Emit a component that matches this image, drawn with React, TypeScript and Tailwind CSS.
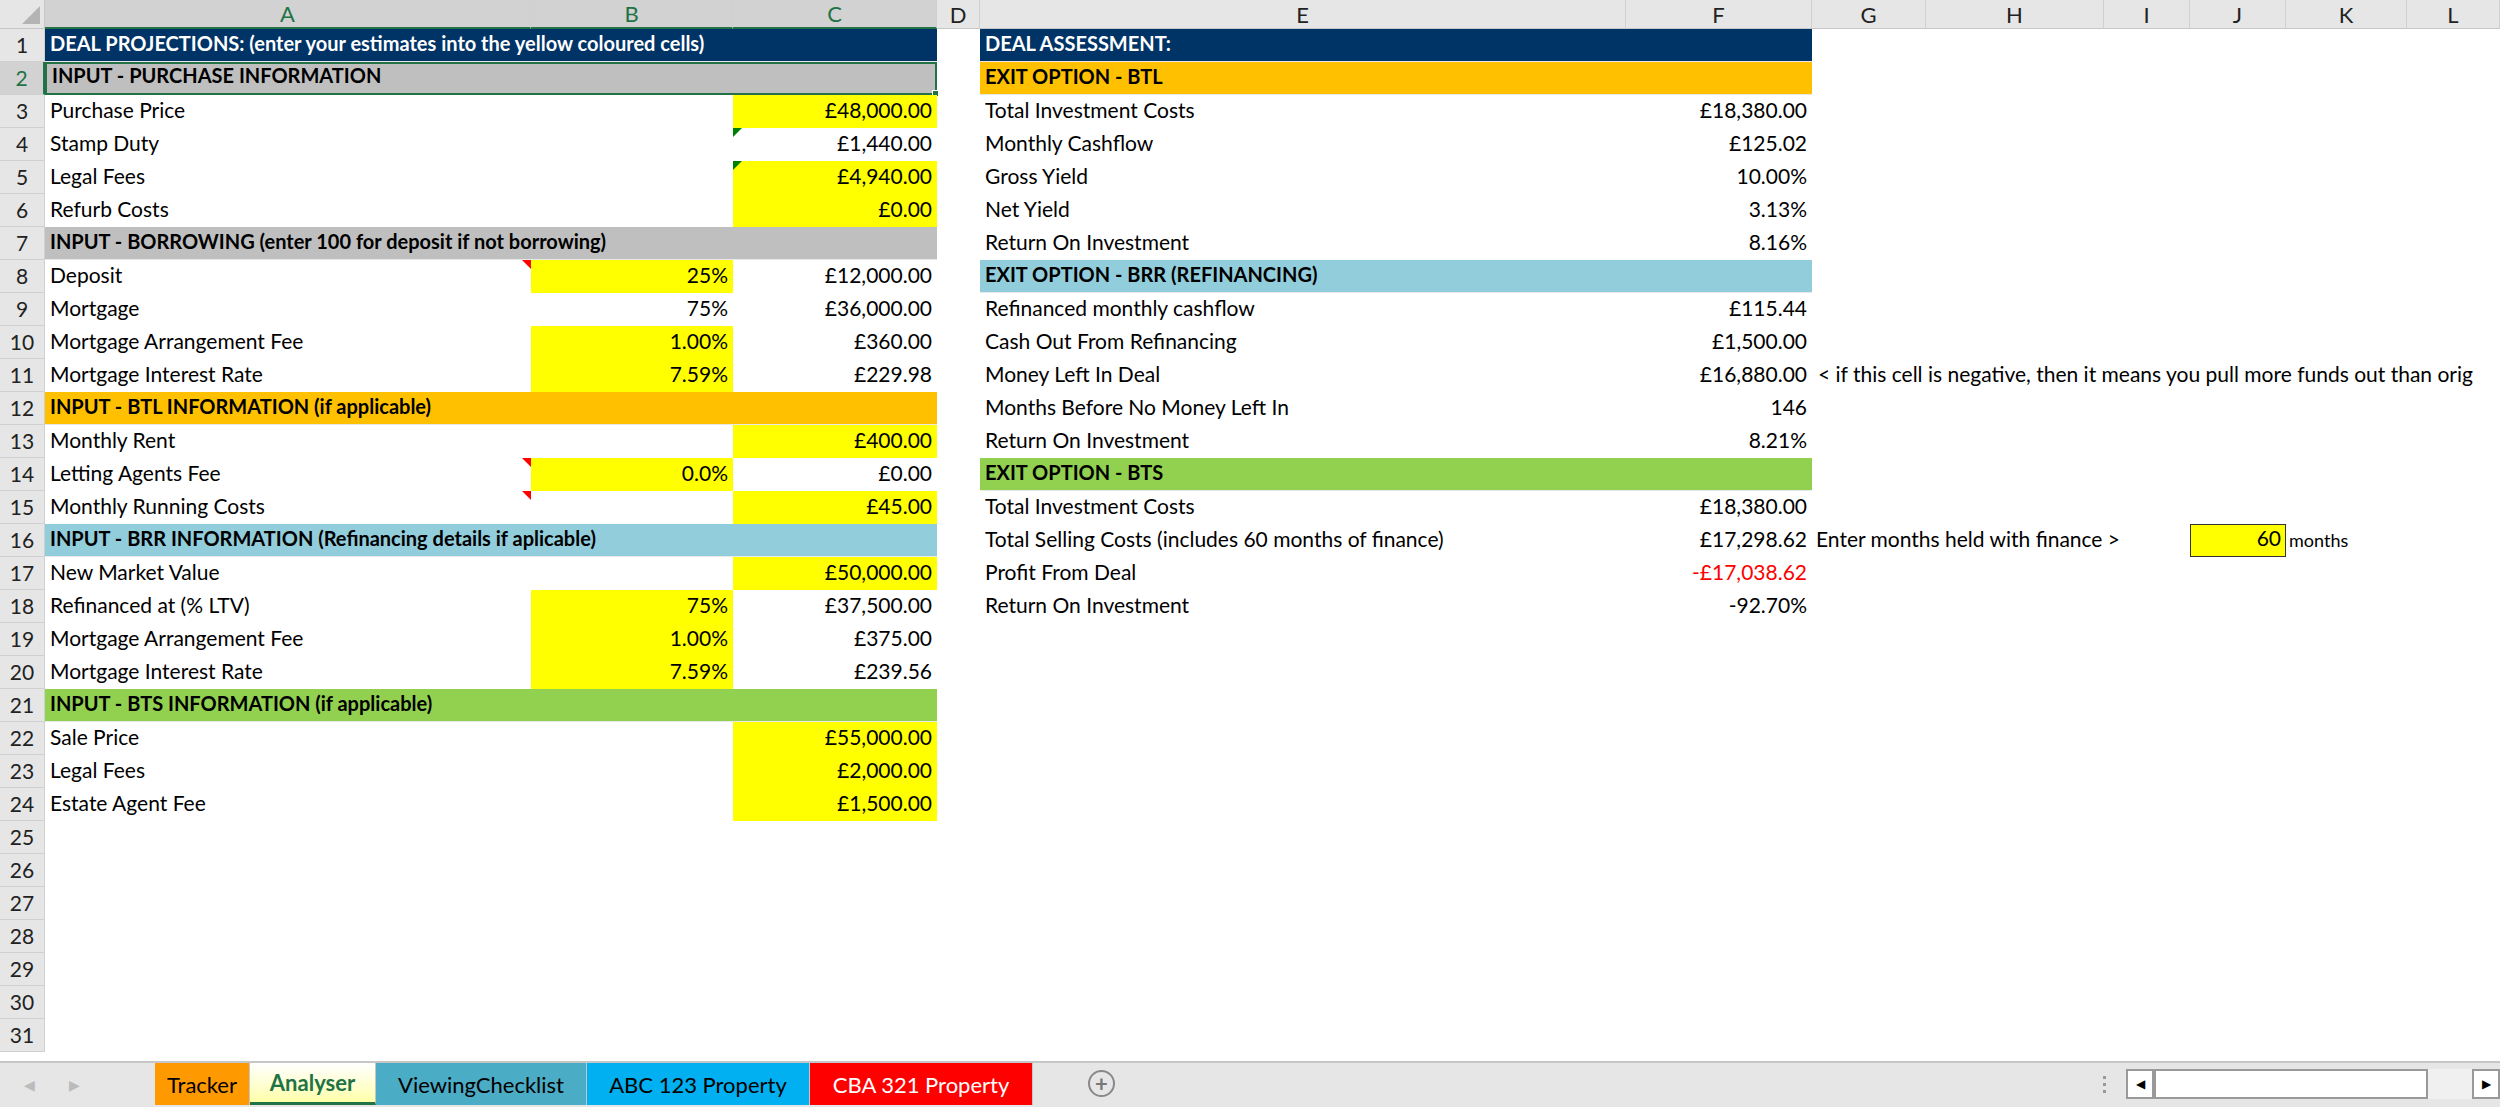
import React from "react";

const NAVY = "bg-[#003366] text-white";
const GRAY = "bg-[#bfbfbf]";
const ORANGE = "bg-[#ffc000]";
const BLUE = "bg-[#92cddc]";
const GREEN = "bg-[#92d050]";

type Left =
  | { hdr: string; bg: string; sel?: boolean }
  | { a?: string; b?: string; c?: string; by?: boolean; cy?: boolean; aRed?: boolean; cGreen?: boolean };
type Right = { hdr: string; bg: string } | { e?: string; f?: string; red?: boolean };

const left: Left[] = [
  { hdr: "DEAL PROJECTIONS: (enter your estimates into the yellow coloured cells)", bg: NAVY },
  { hdr: "INPUT - PURCHASE INFORMATION", bg: GRAY, sel: true },
  { a: "Purchase Price", c: "£48,000.00", cy: true },
  { a: "Stamp Duty", c: "£1,440.00", cGreen: true },
  { a: "Legal Fees", c: "£4,940.00", cy: true, cGreen: true },
  { a: "Refurb Costs", c: "£0.00", cy: true },
  { hdr: "INPUT - BORROWING (enter 100 for deposit if not borrowing)", bg: GRAY },
  { a: "Deposit", b: "25%", by: true, c: "£12,000.00", aRed: true },
  { a: "Mortgage", b: "75%", c: "£36,000.00" },
  { a: "Mortgage Arrangement Fee", b: "1.00%", by: true, c: "£360.00" },
  { a: "Mortgage Interest Rate", b: "7.59%", by: true, c: "£229.98" },
  { hdr: "INPUT - BTL INFORMATION (if applicable)", bg: ORANGE },
  { a: "Monthly Rent", c: "£400.00", cy: true },
  { a: "Letting Agents Fee", b: "0.0%", by: true, c: "£0.00", aRed: true },
  { a: "Monthly Running Costs", c: "£45.00", cy: true, aRed: true },
  { hdr: "INPUT - BRR INFORMATION (Refinancing details if aplicable)", bg: BLUE },
  { a: "New Market Value", c: "£50,000.00", cy: true },
  { a: "Refinanced at (% LTV)", b: "75%", by: true, c: "£37,500.00" },
  { a: "Mortgage Arrangement Fee", b: "1.00%", by: true, c: "£375.00" },
  { a: "Mortgage Interest Rate", b: "7.59%", by: true, c: "£239.56" },
  { hdr: "INPUT - BTS INFORMATION (if applicable)", bg: GREEN },
  { a: "Sale Price", c: "£55,000.00", cy: true },
  { a: "Legal Fees", c: "£2,000.00", cy: true },
  { a: "Estate Agent Fee", c: "£1,500.00", cy: true },
];

const right: Right[] = [
  { hdr: "DEAL ASSESSMENT:", bg: NAVY },
  { hdr: "EXIT OPTION - BTL", bg: ORANGE },
  { e: "Total Investment Costs", f: "£18,380.00" },
  { e: "Monthly Cashflow", f: "£125.02" },
  { e: "Gross Yield", f: "10.00%" },
  { e: "Net Yield", f: "3.13%" },
  { e: "Return On Investment", f: "8.16%" },
  { hdr: "EXIT OPTION - BRR (REFINANCING)", bg: BLUE },
  { e: "Refinanced monthly cashflow", f: "£115.44" },
  { e: "Cash Out From Refinancing", f: "£1,500.00" },
  { e: "Money Left In Deal", f: "£16,880.00" },
  { e: "Months Before No Money Left In", f: "146" },
  { e: "Return On Investment", f: "8.21%" },
  { hdr: "EXIT OPTION - BTS", bg: GREEN },
  { e: "Total Investment Costs", f: "£18,380.00" },
  { e: "Total Selling Costs (includes 60 months of finance)", f: "£17,298.62" },
  { e: "Profit From Deal", f: "-£17,038.62", red: true },
  { e: "Return On Investment", f: "-92.70%" },
];

const cols = ["A", "B", "C", "D", "E", "F", "G", "H", "I", "J", "K", "L"];
const cell = "h-[33px] flex items-end pb-[3px] whitespace-nowrap overflow-visible relative";

function RowHead({ n }: { n: number }) {
  const sel = n === 2;
  return (
    <div
      className={`h-[33px] flex items-center justify-center border-b border-r border-[#d0d0d0] text-[21px] ${
        sel ? "bg-[#d2d2d2] text-[#217346] border-r-2 border-r-[#217346]" : "bg-[#e6e6e6] text-[#222]"
      }`}
    >
      {n}
    </div>
  );
}

function LeftCells({ l }: { l?: Left }) {
  if (!l) return <><div className={cell} /><div className={cell} /><div className={cell} /></>;
  if ("hdr" in l)
    return (
      <div
        className={`col-span-3 ${cell} ${l.bg} font-bold pl-[5px] text-[20px] ${
          l.sel ? "border-2 border-[#217346]" : "border-b border-[#e8e8e8]"
        }`}
      >
        {l.hdr}
        {l.sel && <span className="absolute right-[-4px] bottom-[-4px] w-[7px] h-[7px] bg-[#217346] border border-white" />}
      </div>
    );
  return (
    <>
      <div className={`${cell} pl-[5px]`}>
        {l.a}
        {l.aRed && (
          <span className="absolute right-0 top-0 w-0 h-0 border-t-[9px] border-t-[#ff0000] border-l-[9px] border-l-transparent" />
        )}
      </div>
      <div className={`${cell} justify-end pr-[5px] ${l.by ? "bg-[#ffff00]" : ""}`}>{l.b}</div>
      <div className={`${cell} justify-end pr-[5px] ${l.cy ? "bg-[#ffff00]" : ""}`}>
        {l.cGreen && (
          <span className="absolute left-0 top-0 w-0 h-0 border-t-[9px] border-t-[#008000] border-r-[9px] border-r-transparent" />
        )}
        {l.c}
      </div>
    </>
  );
}

function RightCells({ r }: { r?: Right }) {
  if (!r) return <><div className={cell} /><div className={cell} /></>;
  if ("hdr" in r)
    return (
      <div className={`col-span-2 ${cell} ${r.bg} font-bold pl-[5px] text-[20px] border-b border-[#e8e8e8]`}>{r.hdr}</div>
    );
  return (
    <>
      <div className={`${cell} pl-[5px]`}>{r.e}</div>
      <div className={`${cell} justify-end pr-[5px] ${r.red ? "text-[#ff0000]" : ""}`}>{r.f}</div>
    </>
  );
}

function Extra({ n }: { n: number }) {
  if (n === 11)
    return (
      <>
        <div className={`${cell} pl-[6px]`}>&lt; if this cell is negative, then it means you pull more funds out than orig</div>
        {[0, 1, 2, 3, 4].map((i) => <div key={i} className={cell} />)}
      </>
    );
  if (n === 16)
    return (
      <>
        <div className={`${cell} pl-[4px]`}>Enter months held with finance &gt;</div>
        <div className={cell} />
        <div className={cell} />
        <div className={`${cell} justify-end pr-[4px] bg-[#ffff00] border border-[#333]`}>60</div>
        <div className={`${cell} pl-[3px] text-[18px]`}>months</div>
        <div className={cell} />
      </>
    );
  return <>{[0, 1, 2, 3, 4, 5].map((i) => <div key={i} className={cell} />)}</>;
}

function TabBar() {
  const tabs = [
    { t: "Tracker", c: "bg-[#ff9900] text-black w-[95px]" },
    { t: "Analyser", c: "bg-gradient-to-b from-white to-[#ffffa8] text-[#217346] font-bold w-[126px] border-b-[3px] border-b-[#217346]" },
    { t: "ViewingChecklist", c: "bg-[#4bacc6] text-black w-[211px]" },
    { t: "ABC 123 Property", c: "bg-[#00b0f0] text-black w-[223px]" },
    { t: "CBA 321 Property", c: "bg-[#ff0000] text-white w-[223px]" },
  ];
  return (
    <div className="h-[46px] bg-[#e6e6e6] border-t-2 border-[#c6c6c6] flex items-start relative">
      <div className="w-[155px] flex items-center gap-[34px] pl-[24px] h-[42px] text-[#bbb] text-[14px]">
        <span>◀</span>
        <span>▶</span>
      </div>
      {tabs.map((x) => (
        <div
          key={x.t}
          className={`h-[42px] flex items-center justify-center text-[22px] border-r border-[#c6c6c6] ${x.c}`}
        >
          {x.t}
        </div>
      ))}
      <div className="ml-[55px] mt-[7px] w-[27px] h-[27px] rounded-full border-2 border-[#888] flex items-center justify-center text-[#777] text-[22px] font-bold leading-none">
        +
      </div>
      <div className="ml-auto flex items-center h-[42px]">
        <div className="flex flex-col gap-[4px] mr-[20px]">
          <span className="w-[3px] h-[3px] bg-[#999]" />
          <span className="w-[3px] h-[3px] bg-[#999]" />
          <span className="w-[3px] h-[3px] bg-[#999]" />
        </div>
        <div className="flex h-[30px] w-[374px] bg-[#f0f0f0]">
          <div className="w-[28px] border-2 border-[#999] bg-white flex items-center justify-center text-[12px]">◀</div>
          <div className="w-[274px] border-2 border-[#999] bg-white" />
          <div className="flex-1" />
          <div className="w-[28px] border-2 border-[#999] bg-white flex items-center justify-center text-[12px]">▶</div>
        </div>
      </div>
    </div>
  );
}

export default function App() {
  const rows = Array.from({ length: 31 }, (_, i) => i + 1);
  return (
    <div className="w-[2500px] h-[1107px] overflow-hidden bg-white text-[21px] text-black flex flex-col" style={{ fontFamily: "Lato, 'Open Sans', sans-serif" }}>
      <div className="flex-1 overflow-hidden">
        <div className="grid grid-cols-[45px_486px_202px_204px_43px_646px_186px_114px_178px_86px_96px_121px_1fr]">
          <div className="h-[29px] bg-[#e6e6e6] border-b border-r border-[#c6c6c6] relative">
            <span className="absolute right-[4px] bottom-[4px] w-0 h-0 border-b-[18px] border-b-[#b4b4b4] border-l-[18px] border-l-transparent" />
          </div>
          {cols.map((c, i) => (
            <div
              key={c}
              className={`h-[29px] flex items-center justify-center border-r border-[#d0d0d0] text-[22px] ${
                i < 3 ? "bg-[#d2d2d2] text-[#217346] border-b-2 border-b-[#217346]" : "bg-[#e6e6e6] text-[#222] border-b border-b-[#c6c6c6]"
              }`}
            >
              {c}
            </div>
          ))}
          {rows.map((n) => (
            <React.Fragment key={n}>
              <RowHead n={n} />
              <LeftCells l={left[n - 1]} />
              <div className={cell} />
              <RightCells r={right[n - 1]} />
              <Extra n={n} />
            </React.Fragment>
          ))}
        </div>
      </div>
      <TabBar />
    </div>
  );
}
